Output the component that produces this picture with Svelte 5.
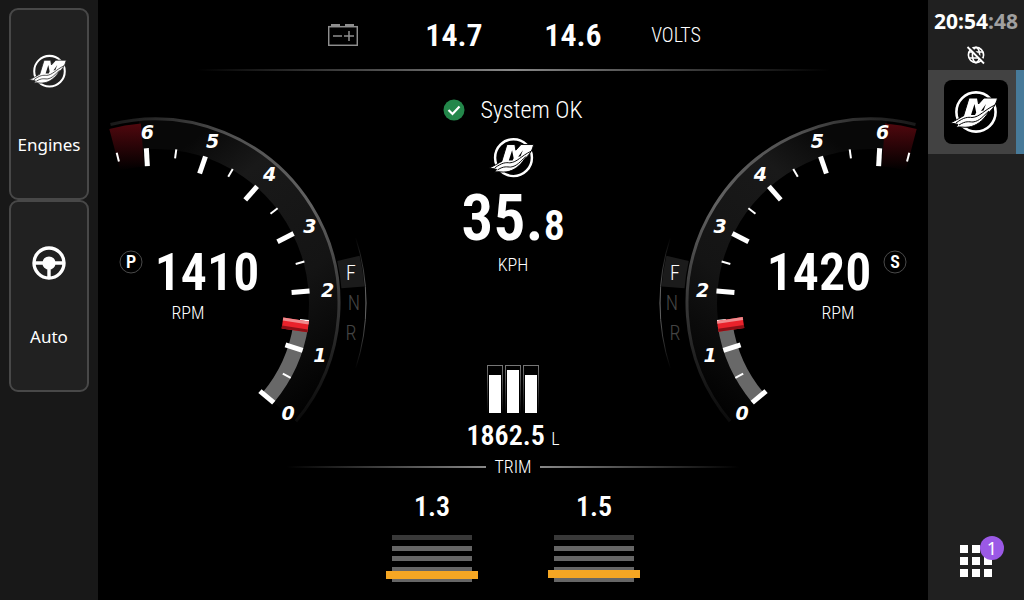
<script>
	let active = $state('engines');

	const voltages = ['14.7', '14.6'];
	const tanks = [38, 43, 38];
	const trims = [
		{ value: '1.3', level: 3 },
		{ value: '1.5', level: 4 }
	];
	const gauges = [
		{ id: 'port', letter: 'P', rpm: 1410, side: 1 },
		{ id: 'starboard', letter: 'S', rpm: 1420, side: -1 }
	];
	const gears = [
		{ name: 'F', x: 196, y: -23, on: true },
		{ name: 'N', x: 199, y: 7, on: false },
		{ name: 'R', x: 196, y: 37, on: false }
	];
	const ticks = Array.from({ length: 14 }, (_, i) => i / 2);
	const numbers = [0, 1, 2, 3, 4, 5, 6];

	// Degrees clockwise from three o'clock, for thousands of revs
	const angle = (v) => 40 - v * 22.2;

	function polar(r, deg) {
		const a = (deg * Math.PI) / 180;
		return [r * Math.cos(a), r * Math.sin(a)];
	}

	function arc(r, from, to) {
		return `M${polar(r, from)} A${r} ${r} 0 0 0 ${polar(r, to)}`;
	}

	function sector(inner, outer, from, to) {
		return `${arc(outer, from, to)} L${polar(inner, to)} A${inner} ${inner} 0 0 1 ${polar(inner, from)} Z`;
	}
</script>

{#snippet logo(cut)}
	<svg class="logo" viewBox="7 6 50 44" aria-hidden="true">
		<circle cx="32" cy="28" r="19.6" fill="none" stroke="#fff" stroke-width="2.6" />
		<path
			d="M6 39 C13 36 17 33 19.5 32 L25 14 H33.5 L34.5 20 L40 14 H53.5 C52 21 48 26 44 29 C39 37 32 42 25 43 C19 44 16 42 12 43.5 L14 40.5 C11 39.5 9 39.5 6 39 Z"
			fill="#fff"
			stroke={cut}
			stroke-width="1"
		/>
		<path d="M27 31 L30.5 20 L32.2 28.5 L31 31 Z M37 27 L42 20 L39.5 26.5 Z" fill={cut} />
		<path
			d="M12 39 C20 33 24 33 28 33.5 C36 33 40 26 51 21 M15 41 C22 36.5 25 38 29 38 C36 37 39 32 45 27"
			fill="none"
			stroke={cut}
			stroke-width="1"
		/>
	</svg>
{/snippet}

{#snippet gauge(g)}
	<svg
		class="gauge"
		viewBox="{g.side === 1 ? -57 : -215} -190 272 315"
		role="img"
		aria-label="{g.id} engine {g.rpm} RPM"
	>
		<defs>
			<linearGradient id="{g.id}-band" gradientUnits="userSpaceOnUse" x1="-30" y1="-110" x2="150" y2="120">
				<stop offset="0" stop-color="#080808" />
				<stop offset="0.2" stop-color="#191919" />
				<stop offset="0.6" stop-color="#141414" />
				<stop offset="1" stop-color="#000" />
			</linearGradient>
			<linearGradient id="{g.id}-rim" gradientUnits="userSpaceOnUse" x1="-45" y1="-180" x2="150" y2="120">
				<stop offset="0" stop-color="#181818" />
				<stop offset="0.2" stop-color="#505050" />
				<stop offset="0.5" stop-color="#626262" />
				<stop offset="0.8" stop-color="#333" />
				<stop offset="1" stop-color="#080808" />
			</linearGradient>
			<linearGradient id="{g.id}-red" x1="0" y1="0" x2="0" y2="1">
				<stop offset="0" stop-color="#50080e" />
				<stop offset="1" stop-color="#000" />
			</linearGradient>
			<linearGradient id="{g.id}-edge" gradientUnits="userSpaceOnUse" x1="0" y1="-66" x2="0" y2="66">
				<stop offset="0" stop-color="#000" />
				<stop offset="0.5" stop-color="#777" />
				<stop offset="1" stop-color="#000" />
			</linearGradient>
		</defs>

		<g transform="scale({g.side} 1)">
			<path d={sector(154, 184, 40, -95)} fill="url(#{g.id}-band)" />
			<path d={sector(137, 180, -94.5, -104.7)} fill="url(#{g.id}-red)" />
			<path d={arc(184, 40, -104)} fill="none" stroke="url(#{g.id}-rim)" stroke-width="3" />
			<path d={sector(187, 210, -4.5, -13)} fill="#1b1b1b" />
			<path d={arc(211, 18, -18)} fill="none" stroke="url(#{g.id}-edge)" stroke-width="1" />
			<path d={sector(140, 155, 40, angle(g.rpm / 1000))} fill="#686868" />
			{#each ticks as t}
				<line
					x1={t % 1 ? 146 : 137}
					x2="155"
					y1="0"
					y2="0"
					stroke="#fff"
					stroke-width={t % 1 ? 2 : 5}
					transform="rotate({angle(t)})"
				/>
			{/each}
			<g transform="rotate({angle(g.rpm / 1000)})">
				<rect x="129" y="-5" width="26" height="11" fill="#e9222b" />
				<rect x="129" y="-5" width="26" height="3" fill="#f08a8d" />
				<rect x="129" y="3" width="26" height="3" fill="#8c1016" />
			</g>
		</g>

		{#each numbers as n}
			{@const [x, y] = polar(171, angle(n))}
			<text class="number" x={x * g.side + 2} y={y + 7}>{n}</text>
		{/each}
		{#each gears as gear}
			<text class="gear" class:on={gear.on} x={gear.x * g.side} y={gear.y}>{gear.name}</text>
		{/each}
		<circle cx={-24 * g.side} cy="-41" r="11" fill="none" stroke="#4a4a4a" />
		<text class="letter" x={-24 * g.side} y="-35">{g.letter}</text>
		<text class="rpm" x={52 * g.side} y="-13">{g.rpm}</text>
		<text class="unit" x={33 * g.side} y="16">RPM</text>
	</svg>
{/snippet}

<div class="screen">
	<nav class="left">
		<button class="tile" onclick={() => (active = 'engines')}>
			<span class="icon">{@render logo('#212121')}</span>
			<span>Engines</span>
		</button>
		<button class="tile" onclick={() => (active = 'auto')}>
			<span class="icon">
				<svg class="wheel" viewBox="0 0 34 34" aria-hidden="true">
					<circle cx="17" cy="17" r="15" fill="none" stroke="#fff" stroke-width="3.4" />
					<circle cx="17" cy="17" r="6.6" fill="#fff" />
					<path d="M2 17 H32 M17 17 V32" stroke="#fff" stroke-width="3.4" />
				</svg>
			</span>
			<span>Auto</span>
		</button>
	</nav>

	<main>
		<header>
			<svg class="battery" viewBox="0 0 30 22" aria-label="Battery" role="img">
				<path d="M3 0 H12 V3 H3 Z M17 0 H26 V3 H17 Z" fill="#8e8e8e" />
				<rect x="0.7" y="2.7" width="28.6" height="18.6" fill="none" stroke="#8e8e8e" stroke-width="1.5" />
				<path d="M5 12 H14 M16 12 H26 M21 7 V17" stroke="#8e8e8e" stroke-width="1.5" />
			</svg>
			{#each voltages as v}
				<span class="volts">{v}</span>
			{/each}
			<span class="volts-label">VOLTS</span>
		</header>

		<div class="dash">
			{@render gauge(gauges[0])}
			<section class="center">
				<p class="status">
					<svg class="check" viewBox="0 0 22 22" aria-hidden="true">
						<circle cx="11" cy="11" r="10.5" fill="#23874a" />
						<path d="M5.5 11 L9.5 15 L16.5 7.5" fill="none" stroke="#fff" stroke-width="2.2" />
					</svg>
					System OK
				</p>
				<div class="brand">{@render logo('#000')}</div>
				<p class="speed">35.<span>8</span></p>
				<p class="speed-unit">KPH</p>
				<div class="tanks">
					{#each tanks as level}
						<div class="tank"><div style:height="{level}px"></div></div>
					{/each}
				</div>
				<p class="fuel">1862.5 <span>L</span></p>
			</section>
			{@render gauge(gauges[1])}
		</div>

		<h2>TRIM</h2>
		<div class="trims">
			{#each trims as trim}
				<div class="trim">
					<span>{trim.value}</span>
					<div class="bars">
						{#each [0, 1, 2, 3, 4] as bar}
							<i class:dim={bar === 0}></i>
						{/each}
						<div class="marker" style:bottom="{trim.level}px"></div>
					</div>
				</div>
			{/each}
		</div>
	</main>

	<aside>
		<time datetime="20:54:48">20:54<span>:48</span></time>
		<svg class="globe" viewBox="0 0 20 20" role="img" aria-label="Offline">
			<g fill="none" stroke="#fff" stroke-width="1.6">
				<circle cx="10" cy="10" r="7.6" />
				<ellipse cx="10" cy="10" rx="3.6" ry="7.6" />
				<path d="M3 7 H17 M3 13 H17" />
			</g>
			<path d="M3 1 L19 17" stroke="#202020" stroke-width="2" />
			<path d="M1.5 2 L18 18.5" stroke="#fff" stroke-width="1.8" />
		</svg>
		<button class="app" aria-label="Engines app">
			<span class="app-icon">{@render logo('#000')}</span>
		</button>
		<button class="menu" aria-label="All apps">
			<svg viewBox="0 0 32 32" aria-hidden="true">
				{#each [0, 12, 24] as y}
					{#each [0, 12, 24] as x}
						<rect {x} {y} width="8" height="8" fill="#fff" />
					{/each}
				{/each}
			</svg>
			<span class="badge">1</span>
		</button>
	</aside>
</div>

<style>
	:global(body) {
		background: #000;
	}
	.screen {
		display: grid;
		grid-template-columns: 98px 1fr 96px;
		min-height: 100vh;
		background: #000;
		color: #fff;
		font-family: 'Roboto Condensed', 'Liberation Sans Narrow', sans-serif;
	}
	svg {
		display: block;
	}
	p,
	h2 {
		margin: 0;
		font-weight: 300;
	}
	button {
		margin: 0;
		padding: 0;
		border: 0;
		color: inherit;
		cursor: pointer;
	}

	.left {
		display: flex;
		flex-direction: column;
		padding: 8px 9px;
		background: #181818;
	}
	.tile {
		box-sizing: border-box;
		display: flex;
		flex-direction: column;
		align-items: center;
		gap: 43px;
		height: 192px;
		padding-top: 42px;
		border: 2px solid #484848;
		border-radius: 9px;
		background: #212121;
		font: 17px/24px 'Noto Sans', sans-serif;
	}
	.icon {
		display: grid;
		place-items: center;
		height: 38px;
	}
	.logo {
		width: 100%;
		overflow: visible;
	}
	.icon .logo {
		width: 39px;
	}
	.wheel {
		width: 34px;
	}

	main {
		display: flex;
		flex-direction: column;
	}
	header {
		display: grid;
		grid-template-columns: 88px 134px 104px 102px;
		justify-content: center;
		align-items: center;
		justify-items: center;
		height: 69px;
		border-bottom: 2px solid;
		border-image: linear-gradient(90deg, #000 12%, #888 50%, #000 88%) 1;
	}
	.battery {
		width: 30px;
	}
	.volts {
		font-size: 32px;
		font-weight: 600;
	}
	.volts-label {
		font-size: 20px;
		font-weight: 300;
	}

	.dash {
		display: grid;
		grid-template-columns: 272px 1fr 272px;
		align-items: start;
	}
	.gauge {
		width: 100%;
		margin-top: 42px;
	}
	.gauge text {
		fill: #fff;
		text-anchor: middle;
	}
	.gauge .number {
		font: italic 700 19px 'DejaVu Sans', sans-serif;
	}
	.gauge .gear {
		fill: #444;
		font-size: 20px;
		font-weight: 300;
	}
	.gauge .gear.on {
		fill: #fff;
	}
	.gauge .letter {
		font-size: 18px;
		font-weight: 600;
	}
	.gauge .rpm {
		font-size: 52px;
		font-weight: 600;
	}
	.gauge .unit {
		font-size: 18px;
		font-weight: 300;
	}

	.center {
		display: flex;
		flex-direction: column;
		align-items: center;
		padding-top: 24px;
	}
	.status {
		display: flex;
		align-items: center;
		gap: 15px;
		font-size: 24px;
		line-height: 30px;
	}
	.check {
		width: 22px;
	}
	.brand {
		width: 47px;
		height: 42px;
		margin-top: 12px;
	}
	.speed {
		margin-top: 8px;
		font-size: 64px;
		font-weight: 600;
		line-height: 64px;
	}
	.speed span {
		font-size: 42px;
		line-height: 1;
	}
	.speed-unit {
		margin-top: 2px;
		font-size: 18px;
		line-height: 24px;
	}
	.tanks {
		display: flex;
		gap: 2px;
		margin-top: 88px;
	}
	.tank {
		box-sizing: border-box;
		display: flex;
		align-items: flex-end;
		width: 16px;
		height: 48px;
		padding: 0 1px;
		border: 1px solid;
		border-image: linear-gradient(#777, #000) 1;
		border-bottom: 0;
	}
	.tank div {
		width: 100%;
		background: #fff;
	}
	.fuel {
		margin-top: 7px;
		font-size: 28px;
		font-weight: 600;
		line-height: 32px;
	}
	.fuel span {
		font-size: 18px;
		font-weight: 300;
		line-height: 1;
	}

	h2 {
		display: flex;
		align-items: center;
		align-self: center;
		gap: 8px;
		width: 452px;
		margin-top: 3px;
		font-size: 18px;
		line-height: 24px;
	}
	h2::before,
	h2::after {
		content: '';
		flex: 1;
		height: 2px;
		background: linear-gradient(90deg, #000, #888);
	}
	h2::after {
		background: linear-gradient(90deg, #888, #000);
	}
	.trims {
		display: flex;
		justify-content: center;
		gap: 70px;
		margin-top: 12px;
	}
	.trim {
		display: flex;
		flex-direction: column;
		align-items: center;
		gap: 12px;
		width: 92px;
		font-size: 28px;
		font-weight: 600;
		line-height: 32px;
	}
	.bars {
		position: relative;
		display: flex;
		flex-direction: column;
		justify-content: space-between;
		width: 80px;
		height: 47px;
	}
	.bars i {
		height: 5px;
		background: #666;
	}
	.bars .dim {
		background: #383838;
	}
	.marker {
		position: absolute;
		left: -6px;
		right: -6px;
		height: 8px;
		background: #f5a623;
	}

	aside {
		display: flex;
		flex-direction: column;
		align-items: center;
		background: #202020;
	}
	time {
		margin-top: 8px;
		font: 700 21px/26px 'Noto Sans', sans-serif;
	}
	time span {
		color: #a0a0a0;
	}
	.globe {
		width: 20px;
		margin: 11px 0 5px;
	}
	.app {
		box-sizing: border-box;
		width: 100%;
		height: 84px;
		padding-left: 16px;
		border-right: 8px solid #477a99;
		background: #424242;
	}
	.app-icon {
		box-sizing: border-box;
		display: block;
		width: 64px;
		height: 64px;
		padding: 10px 7px;
		border-radius: 8px;
		background: #000;
	}
	.menu {
		position: relative;
		width: 32px;
		margin: auto 0 23px;
		background: none;
	}
	.badge {
		position: absolute;
		top: -9px;
		right: -12px;
		width: 24px;
		border-radius: 50%;
		background: #9b59e6;
		font: 18px/24px 'Noto Sans', sans-serif;
	}
</style>
